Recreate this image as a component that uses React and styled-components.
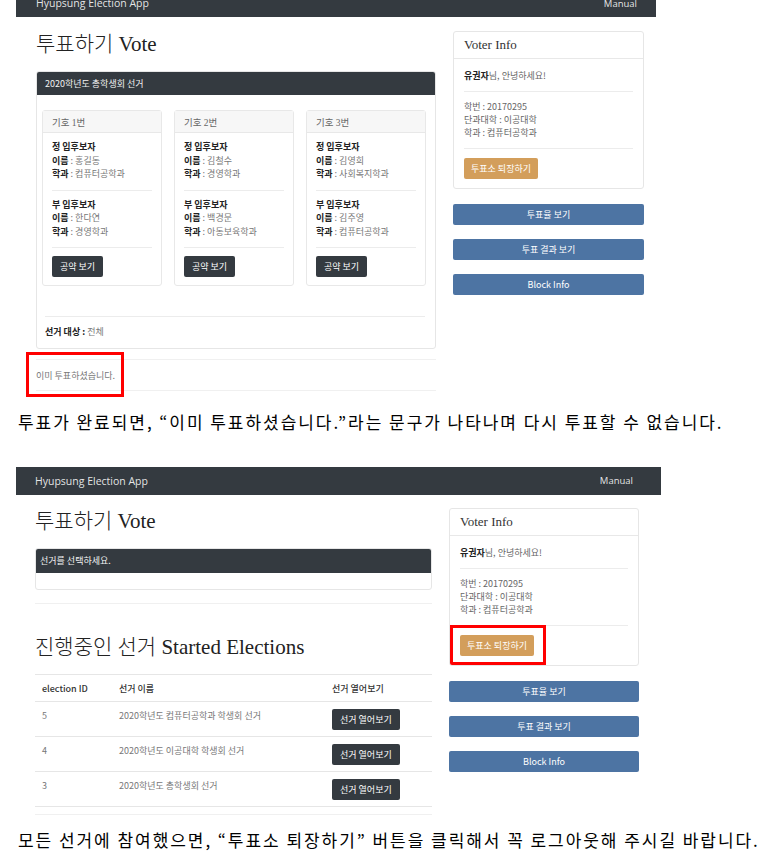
import React from 'react'
import styled, { createGlobalStyle } from 'styled-components'

// manual page: two screenshots of the election app, each followed by a caption

const GlobalStyle = createGlobalStyle`
  body {
    margin: 0;
    background: #fff;
  }
`;

const Page = styled.div`
  width: 771px;
  height: 865px;
  overflow: hidden;
  font-family: "Noto Sans CJK KR", sans-serif;
  color: #212529;
`;

const Shot = styled.div`
  width: ${p => p.$width}px;
  margin-left: 16px;
  margin-top: ${p => p.$mt || 0}px;
  padding-bottom: ${p => p.$pb || 0}px;
  overflow: hidden;
  background: #fff;
`;

const Navbar = styled.div`
  height: 28px;
  margin-top: ${p => (p.$crop ? -p.$crop : 0)}px;
  padding: 0 ${p => p.$pr}px 0 ${p => p.$pl}px;
  background: #343a40;
  color: rgba(255, 255, 255, 0.88);
  font-family: "Open Sans", sans-serif;
  font-size: 10.5px;
  display: flex;
  align-items: center;
  justify-content: space-between;
`;

const NavLink = styled.span`
  font-size: 9.5px;
`;

const Body = styled.div`
  display: grid;
  grid-template-columns: ${p => p.$cols};
  column-gap: 17px;
  align-items: start;
  padding: ${p => p.$pt}px 0 0 ${p => p.$pl}px;
`;

const Column = styled.div`
  display: flex;
  flex-direction: column;
`;

const Title = styled.h1`
  margin: ${p => p.$mt || 0}px 0 ${p => p.$mb}px;
  font-family: "Liberation Serif", "Noto Sans CJK KR", serif;
  font-size: 21px;
  font-weight: 300;
  line-height: ${p => p.$lh || 26}px;
  color: #222;
`;

const Card = styled.div`
  border: 1px solid #e6e6e6;
  border-radius: 3px;
  background: #fff;
  overflow: hidden;
`;

const DarkHeader = styled.div`
  height: ${p => p.$h}px;
  padding: 0 ${p => p.$px}px;
  background: #343a40;
  color: #f2f2f2;
  font-size: 9px;
  display: flex;
  align-items: center;
`;

const ElectionBody = styled.div`
  padding: 15px 10px 9px 5px;
`;

const EmptyBody = styled.div`
  height: 16px;
`;

const CandidateGrid = styled.div`
  display: grid;
  grid-template-columns: repeat(3, 120px);
  column-gap: 12px;
`;

const CandidateCard = styled.div`
  border: 1px solid #e8e8e8;
  border-radius: 3px;
`;

const LightHeader = styled.div`
  height: 21px;
  padding: 0 9px;
  background: #f7f7f7;
  border-bottom: 1px solid #e8e8e8;
  font-family: "Liberation Serif", "Noto Sans CJK KR", serif;
  font-size: 9.5px;
  color: #666;
  display: flex;
  align-items: center;
`;

const CandidateBody = styled.div`
  padding: 7px 9px 8px;
`;

const Line = styled.div`
  margin-top: ${p => p.$mt || 0}px;
  font-size: 9px;
  line-height: 13.5px;
  height: 13.5px;
  color: #777;
  white-space: nowrap;
`;

const Strong = styled.b`
  font-weight: 700;
  color: #222;
`;

const Rule = styled.hr`
  height: 0;
  border: 0;
  border-top: 1px solid #ececec;
  margin: ${p => p.$mt}px 0 ${p => p.$mb}px;
`;

const Button = styled.button`
  display: block;
  height: 21px;
  padding: 0 ${p => p.$px || 8}px;
  border: 0;
  border-radius: 2px;
  background: ${p => p.$bg};
  color: #fff;
  font-family: "Noto Sans CJK KR", sans-serif;
  font-size: 9px;
  line-height: 21px;
  white-space: nowrap;
  cursor: pointer;
`;

const WideButton = styled(Button)`
  width: 100%;
  margin-top: ${p => p.$mt || 14}px;
`;

const CardFooter = styled.div`
  padding: 0 0 0 3px;
  margin-top: 30px;
`;

const Notice = styled.div`
  margin-top: 10px;
  padding: 9px 0 8px;
  border-top: 1px solid #f0f0f0;
  border-bottom: 1px solid #f0f0f0;
  font-size: 9px;
  line-height: 13px;
  color: #777;
`;

const Highlight = styled.div`
  position: relative;
  width: max-content;

  &::after {
    content: '';
    position: absolute;
    top: ${p => p.$t}px;
    right: ${p => p.$r}px;
    bottom: ${p => p.$b}px;
    left: ${p => p.$l}px;
    border: 3px solid #ff0000;
    pointer-events: none;
  }
`;

const VoterHeader = styled.div`
  height: 26px;
  padding: 0 10px;
  border-bottom: 1px solid #e8e8e8;
  font-family: "Liberation Serif", "Noto Sans CJK KR", serif;
  font-size: 13px;
  color: #333;
  display: flex;
  align-items: center;
`;

const VoterBody = styled.div`
  padding: 10px 10px 9px;
`;

const InfoLine = styled.div`
  font-size: 9px;
  line-height: 13px;
  height: 13px;
  color: #666;
`;

const Divider = styled.div`
  margin-top: ${p => p.$mt}px;
  border-top: 1px solid #f0f0f0;
`;

const Table = styled.table`
  width: 100%;
  border-collapse: collapse;
  border-top: 1px solid #e6e6e6;
  font-size: 9px;
  line-height: 13px;
`;

const Th = styled.th`
  width: ${p => p.$w || 'auto'};
  padding: 7px 7px 6px;
  border-bottom: 1px solid #e6e6e6;
  text-align: left;
  font-weight: 500;
  color: #333;
`;

const Td = styled.td`
  padding: 7px 7px 6px;
  border-bottom: 1px solid #e6e6e6;
  vertical-align: top;
  color: #777;
`;

const Caption = styled.p`
  margin: ${p => p.$mt}px 0 0 18px;
  font-family: "Noto Sans CJK KR", sans-serif;
  font-size: 17px;
  line-height: 20px;
  letter-spacing: 1.95px;
  white-space: nowrap;
  color: #000;
`;

const candidates = [
  { no: 1, main: ['홍길동', '컴퓨터공학과'], sub: ['한다연', '경영학과'] },
  { no: 2, main: ['김철수', '경영학과'], sub: ['백경문', '아동보육학과'] },
  { no: 3, main: ['김영희', '사회복지학과'], sub: ['김주영', '컴퓨터공학과'] },
];

const elections = [
  { id: 5, name: '2020학년도 컴퓨터공학과 학생회 선거' },
  { id: 4, name: '2020학년도 이공대학 학생회 선거' },
  { id: 3, name: '2020학년도 총학생회 선거' },
];

const Person = ({ role, info }) => (
  <>
    <Line><Strong>{role} 입후보자</Strong></Line>
    <Line><Strong>이름</Strong> : {info[0]}</Line>
    <Line><Strong>학과</Strong> : {info[1]}</Line>
  </>
);

const Candidate = ({ c }) => (
  <CandidateCard>
    <LightHeader>기호 {c.no}번</LightHeader>
    <CandidateBody>
      <Person role="정" info={c.main} />
      <Rule $mt={9} $mb={7} />
      <Person role="부" info={c.sub} />
      <Rule $mt={9} $mb={8} />
      <Button $bg="#343a40">공약 보기</Button>
    </CandidateBody>
  </CandidateCard>
);

const VoterPanel = ({ highlight }) => {
  const exit = <Button $bg="#d39e5b" $px={7}>투표소 퇴장하기</Button>;
  return (
    <Column>
      <Card>
        <VoterHeader>Voter Info</VoterHeader>
        <VoterBody>
          <InfoLine><Strong>유권자</Strong>님, 안녕하세요!</InfoLine>
          <Rule $mt={9} $mb={8} />
          <InfoLine>학번 : 20170295</InfoLine>
          <InfoLine>단과대학 : 이공대학</InfoLine>
          <InfoLine>학과 : 컴퓨터공학과</InfoLine>
          <Rule $mt={9} $mb={9} />
          {highlight ? <Highlight $t={-10} $r={-12} $b={-9} $l={-10}>{exit}</Highlight> : exit}
        </VoterBody>
      </Card>
      <WideButton $bg="#4d74a3" $mt={15}>투표율 보기</WideButton>
      <WideButton $bg="#4d74a3">투표 결과 보기</WideButton>
      <WideButton $bg="#4d74a3">Block Info</WideButton>
    </Column>
  );
};

const App = () => {
  return (
    <Page>
      <GlobalStyle />

      <Shot $width={640} $pb={6}>
        <Navbar $crop={11} $pl={20} $pr={19}>
          <span>Hyupsung Election App</span>
          <NavLink>Manual</NavLink>
        </Navbar>
        <Body $cols="400px 191px" $pt={14} $pl={20}>
          <Column>
            <Title $mb={14}>투표하기 Vote</Title>
            <Card>
              <DarkHeader $h={23} $px={8}>2020학년도 총학생회 선거</DarkHeader>
              <ElectionBody>
                <CandidateGrid>
                  {candidates.map(c => <Candidate key={c.no} c={c} />)}
                </CandidateGrid>
                <CardFooter>
                  <Rule $mt={0} $mb={0} />
                  <Line $mt={8}><Strong>선거 대상 :</Strong> 전체</Line>
                </CardFooter>
              </ElectionBody>
            </Card>
            <Notice>
              <Highlight $t={-17} $r={-9} $b={-15} $l={-10}>이미 투표하셨습니다.</Highlight>
            </Notice>
          </Column>
          <VoterPanel />
        </Body>
      </Shot>

      <Caption $mt={15}>투표가 완료되면, “이미 투표하셨습니다.”라는 문구가 나타나며 다시 투표할 수 없습니다.</Caption>

      <Shot $width={645} $mt={35}>
        <Navbar $pl={19} $pr={28}>
          <span>Hyupsung Election App</span>
          <NavLink>Manual</NavLink>
        </Navbar>
        <Body $cols="397px 190px" $pt={13} $pl={19}>
          <Column>
            <Title $mb={14}>투표하기 Vote</Title>
            <Card>
              <DarkHeader $h={24} $px={4}>선거를 선택하세요.</DarkHeader>
              <EmptyBody />
            </Card>
            <Divider $mt={13} />
            <Title $mt={29} $mb={13} $lh={28}>진행중인 선거 Started Elections</Title>
            <Table>
              <thead>
                <tr>
                  <Th $w="63px">election ID</Th>
                  <Th $w="199px">선거 이름</Th>
                  <Th>선거 열어보기</Th>
                </tr>
              </thead>
              <tbody>
                {elections.map(e => (
                  <tr key={e.id}>
                    <Td>{e.id}</Td>
                    <Td>{e.name}</Td>
                    <Td><Button $bg="#343a40">선거 열어보기</Button></Td>
                  </tr>
                ))}
              </tbody>
            </Table>
            <Divider $mt={7} />
          </Column>
          <VoterPanel highlight />
        </Body>
      </Shot>

      <Caption $mt={15}>모든 선거에 참여했으면, “투표소 퇴장하기” 버튼을 클릭해서 꼭 로그아웃해 주시길 바랍니다.</Caption>
    </Page>
  )
}

export default App;
